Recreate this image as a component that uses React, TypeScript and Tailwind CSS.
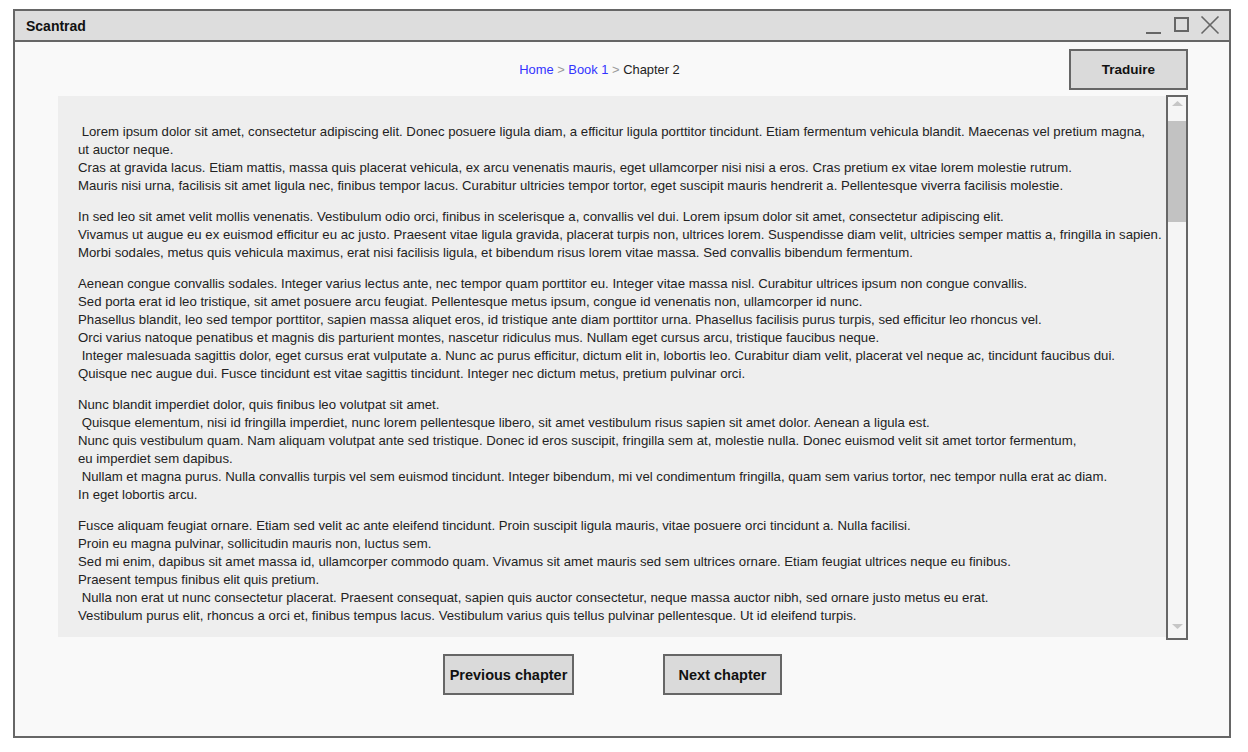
import React from "react";

const paragraphs: string[][] = [
  [
    " Lorem ipsum dolor sit amet, consectetur adipiscing elit. Donec posuere ligula diam, a efficitur ligula porttitor tincidunt. Etiam fermentum vehicula blandit. Maecenas vel pretium magna,",
    "ut auctor neque.",
    "Cras at gravida lacus. Etiam mattis, massa quis placerat vehicula, ex arcu venenatis mauris, eget ullamcorper nisi nisi a eros. Cras pretium ex vitae lorem molestie rutrum.",
    "Mauris nisi urna, facilisis sit amet ligula nec, finibus tempor lacus. Curabitur ultricies tempor tortor, eget suscipit mauris hendrerit a. Pellentesque viverra facilisis molestie.",
  ],
  [
    "In sed leo sit amet velit mollis venenatis. Vestibulum odio orci, finibus in scelerisque a, convallis vel dui. Lorem ipsum dolor sit amet, consectetur adipiscing elit.",
    "Vivamus ut augue eu ex euismod efficitur eu ac justo. Praesent vitae ligula gravida, placerat turpis non, ultrices lorem. Suspendisse diam velit, ultricies semper mattis a, fringilla in sapien.",
    "Morbi sodales, metus quis vehicula maximus, erat nisi facilisis ligula, et bibendum risus lorem vitae massa. Sed convallis bibendum fermentum.",
  ],
  [
    "Aenean congue convallis sodales. Integer varius lectus ante, nec tempor quam porttitor eu. Integer vitae massa nisl. Curabitur ultrices ipsum non congue convallis.",
    "Sed porta erat id leo tristique, sit amet posuere arcu feugiat. Pellentesque metus ipsum, congue id venenatis non, ullamcorper id nunc.",
    "Phasellus blandit, leo sed tempor porttitor, sapien massa aliquet eros, id tristique ante diam porttitor urna. Phasellus facilisis purus turpis, sed efficitur leo rhoncus vel.",
    "Orci varius natoque penatibus et magnis dis parturient montes, nascetur ridiculus mus. Nullam eget cursus arcu, tristique faucibus neque.",
    " Integer malesuada sagittis dolor, eget cursus erat vulputate a. Nunc ac purus efficitur, dictum elit in, lobortis leo. Curabitur diam velit, placerat vel neque ac, tincidunt faucibus dui.",
    "Quisque nec augue dui. Fusce tincidunt est vitae sagittis tincidunt. Integer nec dictum metus, pretium pulvinar orci.",
  ],
  [
    "Nunc blandit imperdiet dolor, quis finibus leo volutpat sit amet.",
    " Quisque elementum, nisi id fringilla imperdiet, nunc lorem pellentesque libero, sit amet vestibulum risus sapien sit amet dolor. Aenean a ligula est.",
    "Nunc quis vestibulum quam. Nam aliquam volutpat ante sed tristique. Donec id eros suscipit, fringilla sem at, molestie nulla. Donec euismod velit sit amet tortor fermentum,",
    "eu imperdiet sem dapibus.",
    " Nullam et magna purus. Nulla convallis turpis vel sem euismod tincidunt. Integer bibendum, mi vel condimentum fringilla, quam sem varius tortor, nec tempor nulla erat ac diam.",
    "In eget lobortis arcu.",
  ],
  [
    "Fusce aliquam feugiat ornare. Etiam sed velit ac ante eleifend tincidunt. Proin suscipit ligula mauris, vitae posuere orci tincidunt a. Nulla facilisi.",
    "Proin eu magna pulvinar, sollicitudin mauris non, luctus sem.",
    "Sed mi enim, dapibus sit amet massa id, ullamcorper commodo quam. Vivamus sit amet mauris sed sem ultrices ornare. Etiam feugiat ultrices neque eu finibus.",
    "Praesent tempus finibus elit quis pretium.",
    " Nulla non erat ut nunc consectetur placerat. Praesent consequat, sapien quis auctor consectetur, neque massa auctor nibh, sed ornare justo metus eu erat.",
    "Vestibulum purus elit, rhoncus a orci et, finibus tempus lacus. Vestibulum varius quis tellus pulvinar pellentesque. Ut id eleifend turpis.",
  ],
];

export default function App() {
  return (
    <div className="w-[1248px] h-[752px] bg-white pt-[9px] pl-[13px] font-['Liberation_Sans',Arial,sans-serif]">
      <div className="w-[1218px] h-[729px] border-2 border-[#666666] bg-[#f9f9f9] flex flex-col">
        {/* Title bar */}
        <div className="h-[31px] shrink-0 bg-[#dddddd] border-b-2 border-[#666666] flex items-center justify-between pl-[11px] pr-[9px]">
          <span className="text-[14px] font-bold text-[#111111] leading-none">Scantrad</span>
          <svg width="75" height="20" viewBox="0 0 75 20" className="mt-[1px]">
            <line x1="1" y1="17" x2="16" y2="17" stroke="#666666" strokeWidth="2" />
            <rect x="30" y="2" width="13" height="13" fill="none" stroke="#666666" strokeWidth="2" />
            <line x1="56.5" y1="0.5" x2="73.5" y2="17.5" stroke="#666666" strokeWidth="1.6" />
            <line x1="73.5" y1="0.5" x2="56.5" y2="17.5" stroke="#666666" strokeWidth="1.6" />
          </svg>
        </div>

        {/* Header row */}
        <div className="h-[41px] mt-[7px] shrink-0 flex items-center pr-[41px]">
          <div className="flex-1 flex justify-center pl-[115px] pt-[2px] text-[12.9px] leading-none">
            <span className="text-[#3333ff]">Home</span>
            <span className="text-[#999999] whitespace-pre"> &gt; </span>
            <span className="text-[#3333ff]">Book 1</span>
            <span className="text-[#999999] whitespace-pre"> &gt; </span>
            <span className="text-[#222222]">Chapter 2</span>
          </div>
          <button className="w-[119px] h-[41px] border-2 border-[#666666] bg-[#dadada] text-[13.5px] font-bold text-[#111111] pt-[2px]">
            Traduire
          </button>
        </div>

        {/* Text area */}
        <div className="mt-[5px] h-[545px] shrink-0 flex pl-[43px] pr-[41px]">
          <div className="flex-1 mt-[1px] mb-[3px] bg-[#eeeeee] overflow-hidden pt-[27px] pl-[20px] text-[13.2px] leading-[18px] text-[#222222]">
            {paragraphs.map((p, i) => (
              <div key={i} className="mb-[13px]">
                {p.map((line, j) => (
                  <div key={j} className="whitespace-pre">
                    {line}
                  </div>
                ))}
              </div>
            ))}
          </div>
          <div className="w-[22px] h-[545px] border-2 border-[#666666] bg-[#f5f5f5] flex flex-col">
            <div className="h-[24px] flex justify-center pt-[4px]">
              <svg width="11" height="6" viewBox="0 0 11 6">
                <polygon points="5.5,0 11,5 0,5" fill="#c6c6c6" />
              </svg>
            </div>
            <div className="h-[101px] bg-[#c2c2c2]" />
            <div className="flex-1" />
            <div className="h-[14px] flex justify-center">
              <svg width="11" height="6" viewBox="0 0 11 6">
                <polygon points="0,0 11,0 5.5,5" fill="#c6c6c6" />
              </svg>
            </div>
          </div>
        </div>

        {/* Bottom buttons */}
        <div className="mt-[14px] shrink-0 flex justify-center gap-[89px] pr-[19px]">
          <button className="w-[131px] h-[41px] border-2 border-[#666666] bg-[#dadada] text-[14.5px] font-bold text-[#111111] pt-[3px]">
            Previous chapter
          </button>
          <button className="w-[119px] h-[41px] border-2 border-[#666666] bg-[#dadada] text-[14.5px] font-bold text-[#111111] pt-[3px]">
            Next chapter
          </button>
        </div>
      </div>
    </div>
  );
}
